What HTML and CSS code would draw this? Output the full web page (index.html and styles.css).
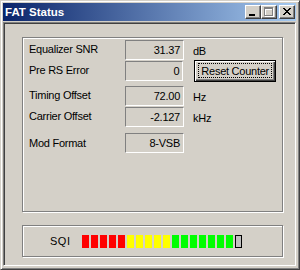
FILE: index.html
```html
<!DOCTYPE html>
<html lang="en">
<head>
    <meta charset="UTF-8">
    <title>FAT Status</title>
    <link rel="stylesheet" href="styles.css">
</head>
<body>
    <div class="window">
        <div class="titlebar">
            <span class="title">FAT Status</span>
            <div class="caption-buttons">
                <button class="cap-btn" title="Minimize">
                    <svg width="14" height="12" viewBox="0 0 14 12" shape-rendering="crispEdges">
                        <rect x="3" y="8" width="6" height="2" fill="#000"/>
                    </svg>
                </button>
                <button class="cap-btn" title="Maximize" disabled>
                    <svg width="14" height="12" viewBox="0 0 14 12" shape-rendering="crispEdges">
                        <path d="M3 2h9v9H3z M4 4h7v6H4z" fill="#fff" fill-rule="evenodd"/>
                        <path d="M2 1h9v9H2z M3 3h7v6H3z" fill="#808080" fill-rule="evenodd"/>
                    </svg>
                </button>
                <button class="cap-btn close" title="Close">
                    <svg width="14" height="12" viewBox="0 0 14 12" shape-rendering="crispEdges">
                        <path d="M3 2h2v1H3z M9 2h2v1H9z M4 3h2v1H4z M8 3h2v1H8z M5 4h4v1H5z M6 5h2v1H6z M5 6h4v1H5z M4 7h2v1H4z M8 7h2v1H8z M3 8h2v1H3z M9 8h2v1H9z" fill="#000"/>
                    </svg>
                </button>
            </div>
        </div>

        <div class="client">
            <div class="group status-group">
                <div class="field-set">
                    <div class="field">
                        <span class="label">Equalizer SNR</span>
                        <span class="value">31.37</span>
                        <span class="unit">dB</span>
                    </div>
                    <div class="field">
                        <span class="label">Pre RS Error</span>
                        <span class="value">0</span>
                        <button class="reset-btn"><span class="focus-rect">Reset Counter</span></button>
                    </div>
                </div>
                <div class="field-set">
                    <div class="field">
                        <span class="label">Timing Offset</span>
                        <span class="value">72.00</span>
                        <span class="unit">Hz</span>
                    </div>
                    <div class="field">
                        <span class="label">Carrier Offset</span>
                        <span class="value">-2.127</span>
                        <span class="unit">kHz</span>
                    </div>
                </div>
                <div class="field-set">
                    <div class="field">
                        <span class="label">Mod Format</span>
                        <span class="value">8-VSB</span>
                    </div>
                </div>
            </div>

            <div class="group sqi-group">
                <span class="sqi-label">SQI</span>
                <div class="sqi-meter">
                    <span class="seg red"></span>
                    <span class="seg red"></span>
                    <span class="seg red"></span>
                    <span class="seg red"></span>
                    <span class="seg red"></span>
                    <span class="seg yellow"></span>
                    <span class="seg yellow"></span>
                    <span class="seg yellow"></span>
                    <span class="seg yellow"></span>
                    <span class="seg yellow"></span>
                    <span class="seg green"></span>
                    <span class="seg green"></span>
                    <span class="seg green"></span>
                    <span class="seg green"></span>
                    <span class="seg green"></span>
                    <span class="seg green"></span>
                    <span class="seg green"></span>
                    <span class="seg empty"></span>
                </div>
            </div>
        </div>
    </div>
</body>
</html>
```

FILE: styles.css
```css
body {
    margin: 0;
    padding: 0;
    font-family: 'Liberation Sans', Arial, sans-serif;
    font-size: 11px;
    letter-spacing: -0.25px;
    color: #000;
    background-color: #d4d0c8;
}

.window {
    width: 300px;
    height: 270px;
    box-sizing: border-box;
    display: flex;
    flex-direction: column;
    background-color: #d4d0c8;
    border: 1px solid;
    border-color: #d4d0c8 #404040 #404040 #d4d0c8;
    box-shadow: inset 1px 1px 0 #fff, inset -1px -1px 0 #808080;
    padding: 2px 3px 3px 2px;
}

/* title bar */

.titlebar {
    flex: none;
    height: 18px;
    display: flex;
    align-items: center;
    justify-content: space-between;
    padding: 0 1px 0 2px;
    background: linear-gradient(to right, #0a246a, #a6caf0);
}

.title {
    color: #fff;
    font-weight: bold;
    font-size: 11.5px;
    letter-spacing: 0;
}

.caption-buttons {
    display: flex;
}

.cap-btn {
    width: 16px;
    height: 14px;
    padding: 0;
    box-sizing: border-box;
    display: flex;
    background-color: #d4d0c8;
    border: 1px solid;
    border-color: #fff #404040 #404040 #fff;
    box-shadow: inset -1px -1px 0 #808080;
}

.cap-btn svg {
    display: block;
}

.cap-btn.close {
    margin-left: 2px;
}

/* client area */

.client {
    flex: 1;
    margin-top: 1px;
    display: flex;
    flex-direction: column;
    border: 1px solid;
    border-color: #808080 #fff #fff #808080;
    box-shadow: inset 1px 1px 0 #404040;
    padding: 14px 12px 8px 18px;
}

.group {
    flex: none;
    box-sizing: border-box;
    border: 1px solid #808080;
    box-shadow: inset 1px 1px 0 #fff, 1px 1px 0 #fff;
}

.status-group {
    height: 175px;
    padding: 2px 6px;
    display: flex;
    flex-direction: column;
    gap: 5px;
}

.field-set {
    display: flex;
    flex-direction: column;
    gap: 1px;
}

.field-set:last-child {
    margin-top: 1px;
}

.field {
    height: 20px;
    display: flex;
    align-items: center;
}

.label {
    width: 96px;
    padding-bottom: 2px;
}

.field-set:last-child .label {
    padding-bottom: 0;
}

.value {
    width: 59px;
    height: 20px;
    box-sizing: border-box;
    border: 1px solid;
    border-color: #808080 #fff #fff #808080;
    text-align: right;
    padding-right: 3px;
    line-height: 18px;
}

.unit {
    margin-left: 9px;
    padding-top: 2px;
}

.reset-btn {
    width: 82px;
    height: 22px;
    margin: -1px 0 -1px 11px;
    box-sizing: border-box;
    padding: 2px 3px 3px 3px;
    display: flex;
    background-color: #d4d0c8;
    border: 1px solid #000;
    box-shadow: inset 1px 1px 0 #fff, inset -1px -1px 0 #404040, inset -2px -2px 0 #808080;
    font-family: 'Liberation Sans', Arial, sans-serif;
    font-size: 11px;
    letter-spacing: -0.25px;
    color: #000;
}

.focus-rect {
    flex: 1;
    display: flex;
    align-items: center;
    justify-content: center;
    border: 1px dotted #000;
}

/* signal quality meter */

.sqi-group {
    height: 32px;
    margin-top: 13px;
    padding-left: 27px;
    display: flex;
    align-items: center;
}

.sqi-label {
    width: 32px;
    letter-spacing: 0.5px;
}

.sqi-meter {
    display: flex;
    gap: 2px;
}

.seg {
    width: 7px;
    height: 13px;
    box-sizing: border-box;
}

.seg.red {
    background-color: #f00;
}

.seg.yellow {
    background-color: #ff0;
}

.seg.green {
    background-color: #0f0;
}

.seg.empty {
    background-color: #c0c0c0;
    border: 1px solid #000;
}
```
